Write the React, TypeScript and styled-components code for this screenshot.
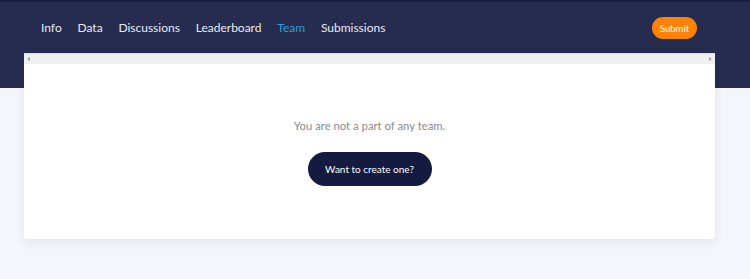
import styled, { createGlobalStyle } from 'styled-components'

const GlobalStyle = createGlobalStyle`
  body {
    margin: 0;
    background: #f5f6fb;
    font-family: 'Lato', 'Open Sans', sans-serif;
  }
`

const Page = styled.div`
  min-height: 279px;
  background: #f5f6fb;
`

const Header = styled.header`
  height: 86px;
  background: #262c50;
  border-top: 2px solid #1b2042;
  display: flex;
  align-items: flex-start;
  justify-content: space-between;
  padding: 0 53px 0 41px;
`

const Nav = styled.nav`
  display: flex;
  gap: 15.8px;
  height: 50px;
  align-items: center;
`

const NavItem = styled.a<{ $active?: boolean }>`
  color: ${p => (p.$active ? '#2d9cdb' : '#e8eaf2')};
  font-size: 12px;
  text-decoration: none;
  cursor: pointer;
`

const SubmitButton = styled.button`
  margin-top: 15px;
  height: 22px;
  width: 45px;
  border: none;
  border-radius: 11px;
  background: #ff8200;
  color: #fff;
  font-family: inherit;
  font-size: 9.5px;
  padding: 0;
`

const Card = styled.section`
  margin: -35px 0 0 24px;
  width: 691px;
  background: #fff;
  border-top: 1px solid #dcdde4;
  border-radius: 0 0 3px 3px;
  box-shadow: 0 4px 10px rgba(30, 40, 90, 0.08);
  position: relative;
`

const ScrollTrack = styled.div`
  height: 10px;
  background: #efefef;
  display: flex;
  align-items: center;
  justify-content: space-between;
  padding: 0 3px;
`

const Arrow = styled.span<{ $dir: 'left' | 'right' }>`
  width: 0;
  height: 0;
  border-top: 2px solid transparent;
  border-bottom: 2px solid transparent;
  ${p =>
    p.$dir === 'left'
      ? 'border-right: 3px solid #a3a3a3;'
      : 'border-left: 3px solid #a3a3a3;'}
`

const Body = styled.div`
  display: flex;
  flex-direction: column;
  align-items: center;
  padding: 55px 0 53px;
`

const Message = styled.p`
  margin: 0;
  color: #8a8a8a;
  font-size: 11.3px;
  line-height: 14px;
`

const CreateButton = styled.button`
  margin-top: 19px;
  width: 124px;
  height: 34px;
  border: none;
  border-radius: 17px;
  background: #141a40;
  color: #fff;
  font-family: inherit;
  font-size: 10px;
  padding: 0;
`

const items = ['Info', 'Data', 'Discussions', 'Leaderboard', 'Team', 'Submissions']

export default function App() {
  return (
    <Page>
      <GlobalStyle />
      <Header>
        <Nav>
          {items.map(item => (
            <NavItem key={item} $active={item === 'Team'}>
              {item}
            </NavItem>
          ))}
        </Nav>
        <SubmitButton>Submit</SubmitButton>
      </Header>
      <Card>
        <ScrollTrack>
          <Arrow $dir="left" />
          <Arrow $dir="right" />
        </ScrollTrack>
        <Body>
          <Message>You are not a part of any team.</Message>
          <CreateButton>Want to create one?</CreateButton>
        </Body>
      </Card>
    </Page>
  )
}
